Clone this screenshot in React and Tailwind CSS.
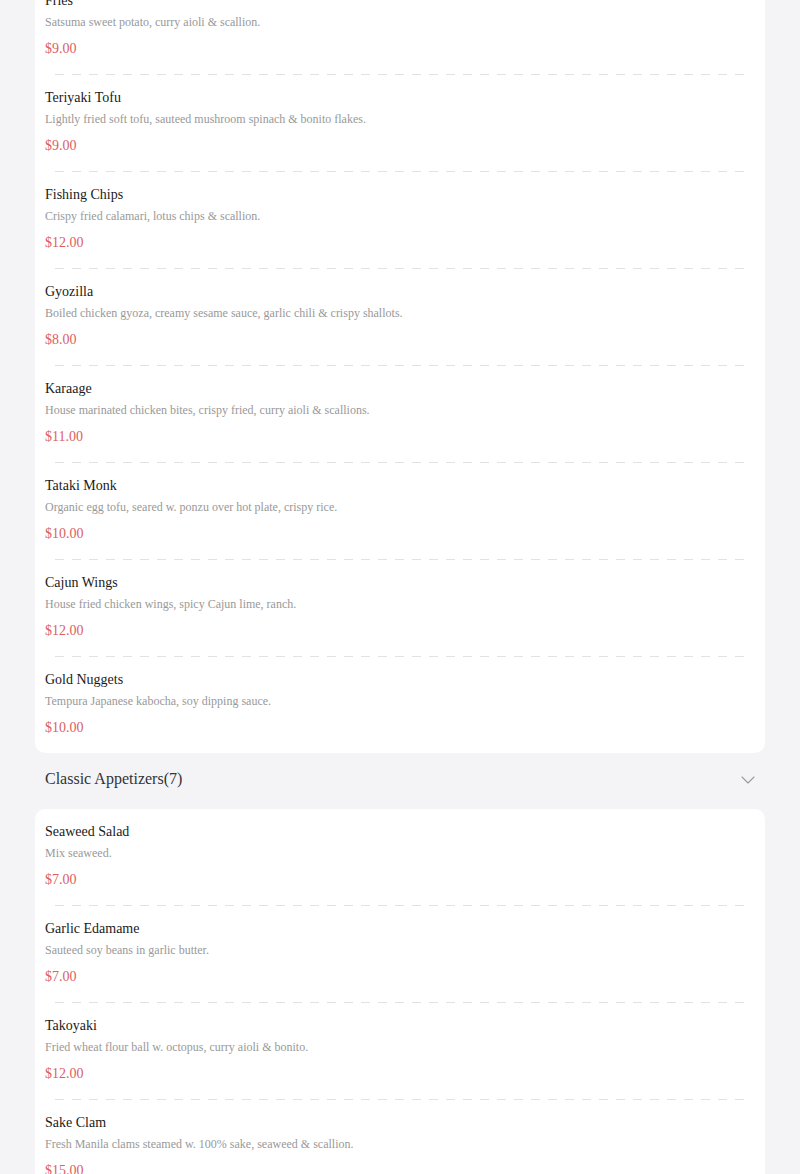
import { ChevronDown } from 'lucide-react'

const hotItems = [
  { name: 'Fries', desc: 'Satsuma sweet potato, curry aioli & scallion.', price: 9 },
  { name: 'Teriyaki Tofu', desc: 'Lightly fried soft tofu, sauteed mushroom spinach & bonito flakes.', price: 9 },
  { name: 'Fishing Chips', desc: 'Crispy fried calamari, lotus chips & scallion.', price: 12 },
  { name: 'Gyozilla', desc: 'Boiled chicken gyoza, creamy sesame sauce, garlic chili & crispy shallots.', price: 8 },
  { name: 'Karaage', desc: 'House marinated chicken bites, crispy fried, curry aioli & scallions.', price: 11 },
  { name: 'Tataki Monk', desc: 'Organic egg tofu, seared w. ponzu over hot plate, crispy rice.', price: 10 },
  { name: 'Cajun Wings', desc: 'House fried chicken wings, spicy Cajun lime, ranch.', price: 12 },
  { name: 'Gold Nuggets', desc: 'Tempura Japanese kabocha, soy dipping sauce.', price: 10 },
]

const classicItems = [
  { name: 'Seaweed Salad', desc: 'Mix seaweed.', price: 7 },
  { name: 'Garlic Edamame', desc: 'Sauteed soy beans in garlic butter.', price: 7 },
  { name: 'Takoyaki', desc: 'Fried wheat flour ball w. octopus, curry aioli & bonito.', price: 12 },
  { name: 'Sake Clam', desc: 'Fresh Manila clams steamed w. 100% sake, seaweed & scallion.', price: 15 },
  { name: 'Spicy Tuna Crispy Rice', desc: 'Crispy rice topped w. spicy tuna & jalapeno.', price: 13 },
  { name: 'Agedashi Tofu', desc: 'Fried tofu in warm dashi broth, bonito & scallion.', price: 9 },
  { name: 'Miso Soup', desc: 'Tofu, seaweed & scallion.', price: 4 },
]

function App() {
  return (
    <div className="min-h-screen overflow-hidden bg-[#f4f4f6] px-[35px] font-['Liberation_Serif',serif]">
      <div className="-mt-[22px]">
        <MenuCard items={hotItems} />
        <div className="flex h-[56px] items-center justify-between pb-[4px] pl-[10px] pr-[5px]">
          <h2 className="text-[16px] text-[#333]">Classic Appetizers({classicItems.length})</h2>
          <ChevronDown className="mt-[2px] h-6 w-6 text-[#9a9a9a]" strokeWidth={1.1} />
        </div>
        <MenuCard items={classicItems} />
      </div>
    </div>
  )
}

function MenuCard({ items }) {
  return (
    <section className="rounded-[10px] bg-white px-[10px]">
      {items.map((item, index) => (
        <div key={item.name}>
          {index > 0 && (
            <div className="mx-[10px] h-px bg-[repeating-linear-gradient(to_right,#e2e2e2_0,#e2e2e2_9px,transparent_9px,transparent_17px)]" />
          )}
          <MenuItem item={item} />
        </div>
      ))}
    </section>
  )
}

function MenuItem({ item }) {
  return (
    <article className="pt-[13px] pb-[15px]">
      <h3 className="text-[14px] leading-[20px] text-[#1a1a1a]">{item.name}</h3>
      <p className="mt-[3px] text-[12px] leading-[16px] text-[#999]">{item.desc}</p>
      <p className="mt-[9px] text-[14px] leading-[20px] text-[#dc5e62]">${item.price.toFixed(2)}</p>
    </article>
  )
}

export default App
